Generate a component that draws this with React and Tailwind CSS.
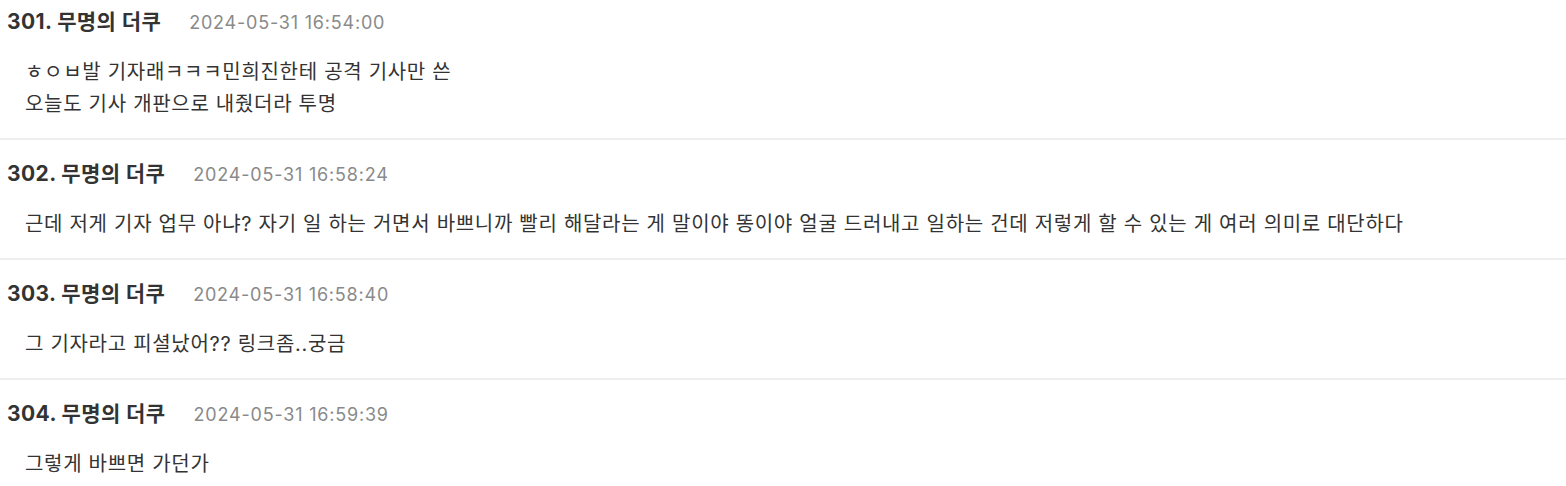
import React from "react";

const comments = [
  {
    no: 301,
    name: "무명의 더쿠",
    date: "2024-05-31 16:54:00",
    lines: ["ㅎㅇㅂ발 기자래ㅋㅋㅋ민희진한테 공격 기사만 쓴", "오늘도 기사 개판으로 내줬더라 투명"],
  },
  {
    no: 302,
    name: "무명의 더쿠",
    date: "2024-05-31 16:58:24",
    lines: [
      "근데 저게 기자 업무 아냐? 자기 일 하는 거면서 바쁘니까 빨리 해달라는 게 말이야 똥이야 얼굴 드러내고 일하는 건데 저렇게 할 수 있는 게 여러 의미로 대단하다",
    ],
  },
  {
    no: 303,
    name: "무명의 더쿠",
    date: "2024-05-31 16:58:40",
    lines: ["그 기자라고 피셜났어?? 링크좀..궁금"],
  },
  {
    no: 304,
    name: "무명의 더쿠",
    date: "2024-05-31 16:59:39",
    lines: ["그렇게 바쁘면 가던가"],
  },
];

const Comment = ({ comment }) => (
  <div className="border-b-2 border-[#eeeeee] px-[7px] pt-[20px] pb-[18px]">
    <div className="flex items-center h-[28px]">
      <span className="text-[21px] font-bold tracking-[0.4px] text-[#333333]">
        {comment.no}. {comment.name}
      </span>
      <span className="ml-[28px] text-[18px] tracking-[0.8px] text-[#8a8a8a]">{comment.date}</span>
    </div>
    <div className="mt-[20px] pl-[18px] text-[20px] leading-[32px] tracking-[0.7px] text-[#333333]">
      {comment.lines.map((line, i) => (
        <div key={i}>{line}</div>
      ))}
    </div>
  </div>
);

export default function App() {
  return (
    <div
      className="w-[1566px] h-[486px] overflow-hidden bg-white"
      style={{ fontFamily: 'Inter, "Noto Sans CJK KR", sans-serif' }}
    >
      <div className="-mt-[12px]">
        {comments.map((c) => (
          <Comment key={c.no} comment={c} />
        ))}
      </div>
    </div>
  );
}
